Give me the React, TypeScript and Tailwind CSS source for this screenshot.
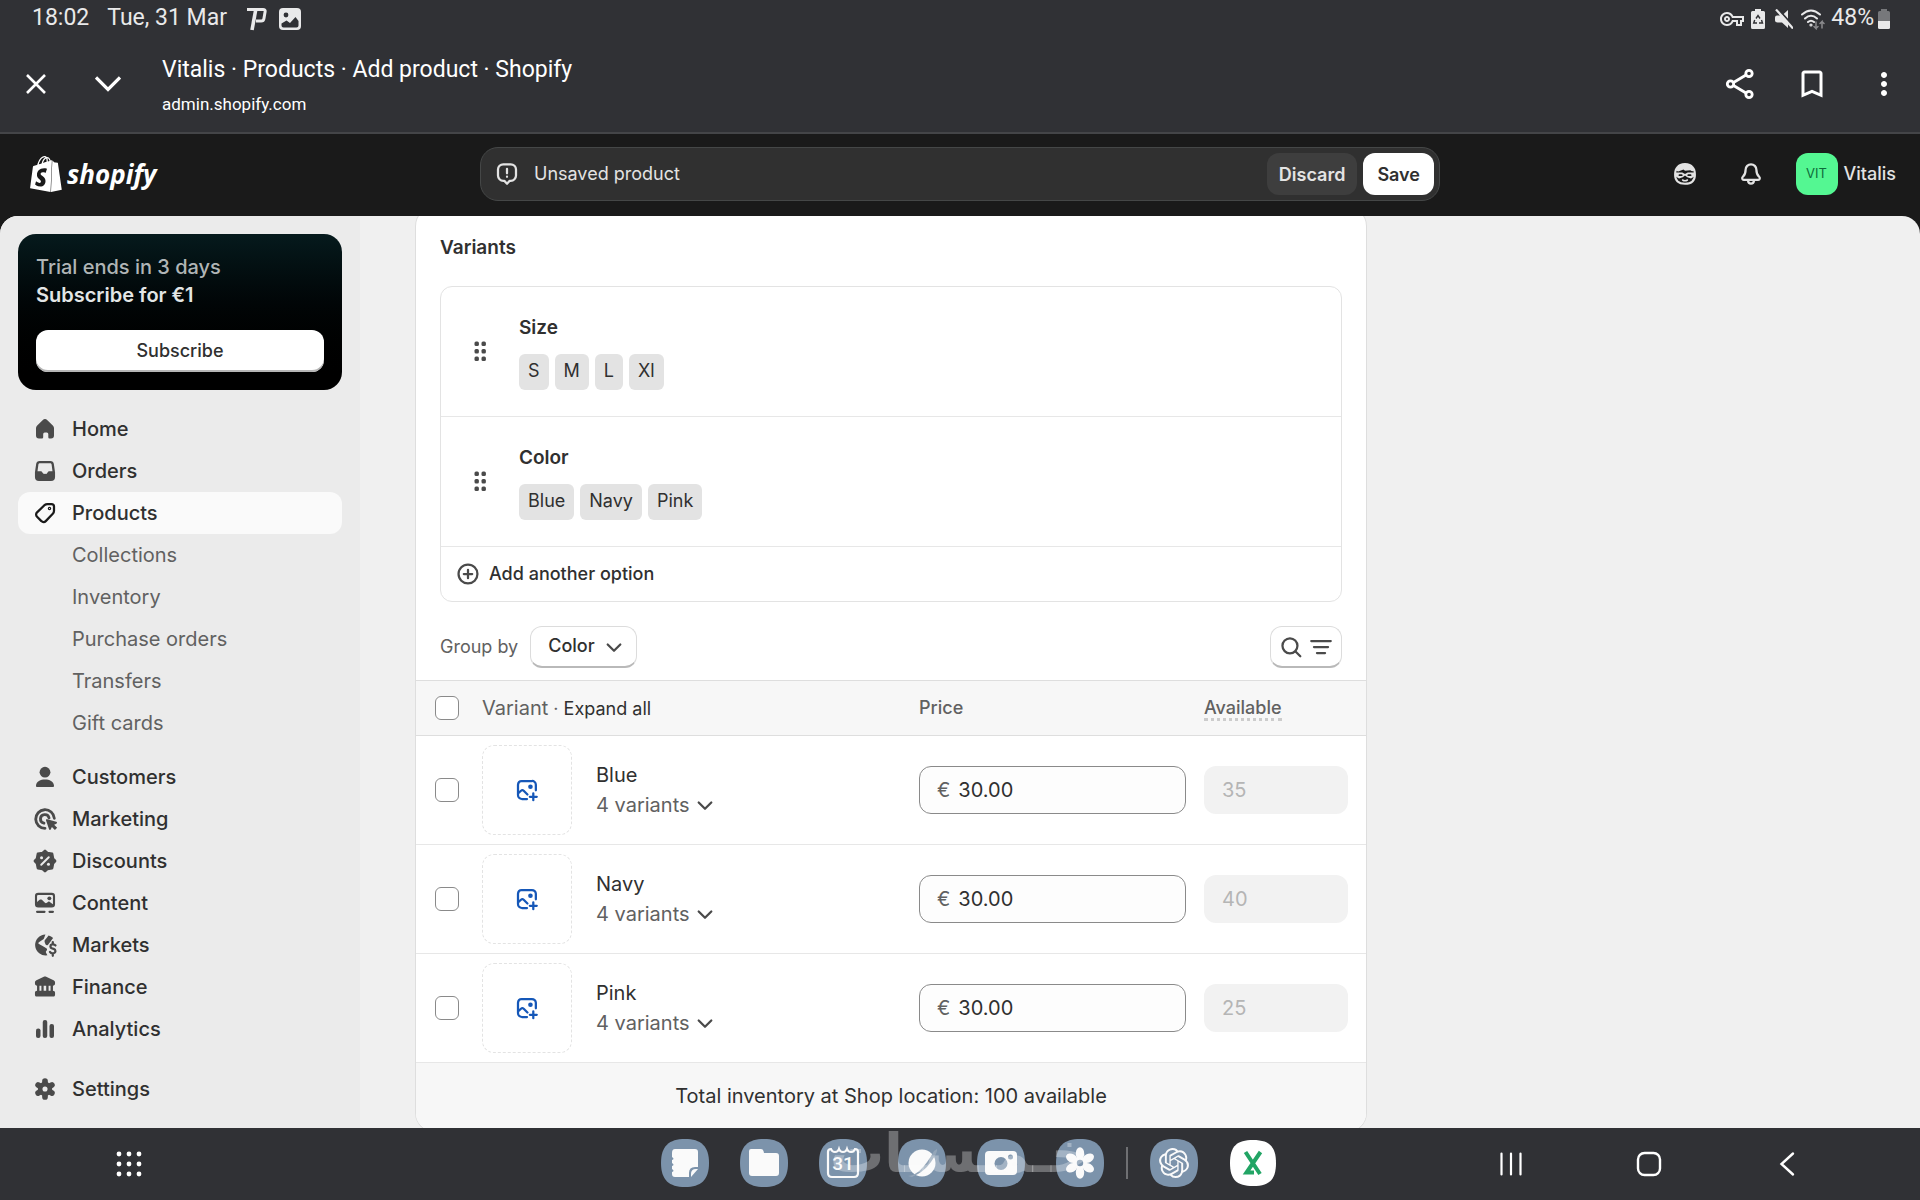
import { ReactNode } from "react";
import { SiOpenai, SiShopify } from "react-icons/si";
import { MdBookmarkBorder, MdMoreVert, MdOutlineVpnKey } from "react-icons/md";

const NAV_ICONS: Record<string, ReactNode> = {
  Home: (
    <path d="M8.4 4.1a2.3 2.3 0 0 1 3.2 0l3.6 3.5c.5.5.8 1.1.8 1.8v4.9a2 2 0 0 1-2 2h-1a.8.8 0 0 1-.8-.8v-2.2a1 1 0 0 0-1-1h-1.4a1 1 0 0 0-1 1v2.2a.8.8 0 0 1-.8.8H6a2 2 0 0 1-2-2V9.400c0-.7.3-1.300.8-1.800z" />
  ),
  Orders: (
    <path
      fillRule="evenodd"
      d="M6.500 3.300h7a2.400 2.400 0 0 1 2.400 2.100l.8 5.500v3.100a2.700 2.700 0 0 1-2.700 2.700H6a2.700 2.700 0 0 1-2.700-2.700v-3.100l.8-5.500a2.400 2.400 0 0 1 2.400-2.100zm.2 1.500c-.6 0-1 .3-1.100.9l-.6 4.500h2c.8 0 1.100.4 1.400 1 .3.500.7.800 1.600.8s1.300-.3 1.600-.8c.3-.6.6-1 1.400-1h2l-.6-4.500c-.1-.6-.5-.9-1.100-.9z"
    />
  ),
  Products: (
    <g fill="none" stroke="currentColor" strokeWidth="1.5" strokeLinejoin="round">
      <path d="M11.700 4h2.600A1.700 1.700 0 0 1 16 5.700v2.800c0 .8-.3 1.500-.8 2l-4.700 4.900a2 2 0 0 1-2.900 0l-2.900-2.900a2 2 0 0 1 0-2.900l4.900-4.800c.6-.5 1.300-.8 2.100-.8z" />
      <circle cx="13" cy="7" r=".4" />
    </g>
  ),
  Customers: (
    <>
      <circle cx="10" cy="6.800" r="3.600" />
      <path d="M4 15.600C4.300 13 7 11.700 10 11.700s5.700 1.300 6 3.900c.1.700-.3 1.100-1 1.100H5c-.7 0-1.100-.4-1-1.100z" />
    </>
  ),
  Marketing: (
    <>
      <path
        d="M16.200 9.500A6.200 6.200 0 1 0 10 16.200M12.700 9.300A2.900 2.900 0 1 0 9.300 12.800"
        fill="none"
        stroke="currentColor"
        strokeWidth="1.900"
        strokeLinecap="round"
      />
      <path d="M10.700 11c-.2-.6.2-1 .8-.8l6 1.700c.6.200.7.900.1 1.200l-1.500.8 2 2-1.500 1.500-2-2-.7 1.500c-.3.600-1 .5-1.200-.1z" />
    </>
  ),
  Discounts: (
    <>
      <path
        d="M10 3.300l1.500 1.400 3.200.6.600 3.200L16.700 10l-1.400 1.500-.6 3.200-3.200.6L10 16.700l-1.500-1.400-3.200-.6-.6-3.200L3.300 10l1.400-1.500.6-3.200 3.200-.6z"
        stroke="currentColor"
        strokeWidth="1.800"
        strokeLinejoin="round"
      />
      <path d="M12.500 7.500l-5 5" stroke="#ebebeb" strokeWidth="1.300" strokeLinecap="round" />
      <circle cx="7.700" cy="7.800" r="1" fill="#ebebeb" />
      <circle cx="12.300" cy="12.200" r="1" fill="#ebebeb" />
    </>
  ),
  Content: (
    <>
      <path
        fillRule="evenodd"
        d="M5.500 3.200h9a2.200 2.200 0 0 1 2.200 2.200v5.400a2.200 2.200 0 0 1-2.200 2.200h-9a2.200 2.200 0 0 1-2.200-2.200V5.400a2.200 2.200 0 0 1 2.200-2.200zm0 1.400a.8.800 0 0 0-.8.800v4l1.700-1.500c.5-.4 1-.4 1.500 0l2.100 2c.4.300.8.300 1.200 0l.8-.6c.4-.3.8-.3 1.200 0l2.100 1.500V5.400a.8.800 0 0 0-.8-.8z"
      />
      <circle cx="12.900" cy="6.900" r="1.300" />
      <path d="M4.700 15.900h5M13 15.900h2.300" stroke="currentColor" strokeWidth="1.400" strokeLinecap="round" />
    </>
  ),
  Markets: (
    <>
      <path d="M10.300 3a7 7 0 1 0 1.300 13.900l-.9-1.700c-.3-.6 0-1.100.4-1.500.5-.5.300-1.100-.2-1.500l-2.500-1.600-2.400-1.300c-.5-.3-.5-.9-.1-1.200l3-2c.7-.5.700-1.700 1.400-3.100z" />
      <path d="M9.800 8.100c-.4-.9.300-1.500.9-2.200l1.700-2.300c1.200.3 2.200.9 3 1.800l-3.200 4.200c-.6.800-1.300.8-1.800.1z" />
      <path
        d="M17 10.300c-.5-.7-1.400-.9-2.300-.7-1.500.4-1.500 2.200.1 2.700l1 .3c1.600.5 1.500 2.500 0 2.900-1 .3-2-.1-2.500-.9M15.200 8v1.500M15.200 15.700v1.500"
        fill="none"
        stroke="currentColor"
        strokeWidth="1.500"
        strokeLinecap="round"
      />
    </>
  ),
  Finance: (
    <path
      fillRule="evenodd"
      d="M9.200 3.200c.5-.3 1.100-.3 1.600 0l4.900 2.300c.7.300 1 .8 1 1.500v.7c0 .9-.6 1.400-1.400 1.400v3.400c.9 0 1.400.6 1.400 1.400v1.200c0 .8-.5 1.300-1.300 1.300H4.600c-.8 0-1.300-.5-1.300-1.300v-1.200c0-.8.5-1.400 1.400-1.400V9.100c-.8 0-1.400-.5-1.400-1.400V7c0-.7.3-1.200 1-1.500zM6.300 9.100v3.400h1.300V9.100zm2.800 0v3.400h1.700V9.100zm3.300 0v3.400h1.300V9.100z"
    />
  ),
  Analytics: (
    <>
      <rect x="4" y="9.600" width="3" height="6.400" rx="1.400" />
      <rect x="8.500" y="4" width="3" height="12" rx="1.400" />
      <rect x="13" y="6.600" width="3" height="9.400" rx="1.400" />
    </>
  ),
  Settings: (
    <>
      <path
        d="M10 4.700v10.600M5.400 7.300l9.200 5.400M14.600 7.300l-9.200 5.400"
        stroke="currentColor"
        strokeWidth="3.800"
        strokeLinecap="round"
      />
      <circle cx="10" cy="10" r="4.800" />
      <circle cx="10" cy="10" r="1.700" fill="#ebebeb" />
    </>
  ),
};

type NavItem = { label: string; active?: boolean; children?: string[] };

const NAV: NavItem[] = [
  { label: "Home" },
  { label: "Orders" },
  {
    label: "Products",
    active: true,
    children: ["Collections", "Inventory", "Purchase orders", "Transfers", "Gift cards"],
  },
  { label: "Customers" },
  { label: "Marketing" },
  { label: "Discounts" },
  { label: "Content" },
  { label: "Markets" },
  { label: "Finance" },
  { label: "Analytics" },
];

const OPTIONS = [
  { name: "Size", values: ["S", "M", "L", "Xl"] },
  { name: "Color", values: ["Blue", "Navy", "Pink"] },
];

const VARIANTS = [
  { name: "Blue", price: "30.00", available: "35" },
  { name: "Navy", price: "30.00", available: "40" },
  { name: "Pink", price: "30.00", available: "25" },
];

function Chevron({ className }: { className: string }) {
  return (
    <svg viewBox="0 0 20 20" className={className} fill="none" stroke="currentColor" strokeWidth="1.5" strokeLinecap="round" strokeLinejoin="round">
      <path d="M5.800 8.300L10 12.500l4.200-4.200" />
    </svg>
  );
}

function StatusBar() {
  return (
    <div className="flex h-[37px] items-center justify-between bg-[#303135] pr-[30px] pl-8 font-[Roboto] text-[23px] text-[#e9e9ea]">
      <div className="flex items-center">
        <span>18:02</span>
        <span className="ml-[18px]">Tue, 31 Mar</span>
        <svg viewBox="0 0 20 24" className="ml-5 h-6 w-5" fill="none" stroke="currentColor" strokeWidth="3">
          <path d="M0 2.500h16q2.500 0 2.100 2.200l-1.200 7q-.4 2.300-2.700 2.300H9" />
          <path d="M8.800 2.500L5 23" strokeWidth="3.600" />
        </svg>
        <svg viewBox="0 0 22 22" className="ml-3 size-[22px]">
          <rect width="22" height="22" rx="4" fill="currentColor" />
          <circle cx="7" cy="7" r="2.400" fill="#303135" />
          <path d="M2.500 17.500v-2l5-3 3.500 2.500 5.500-6 3 4v4.500q0 2-2 2h-13q-2 0-2-2z" fill="#303135" />
        </svg>
      </div>
      <div className="flex items-center">
        <MdOutlineVpnKey className="size-6" />
        <svg viewBox="0 0 14 20" className="ml-[7px] h-5 w-[14px]">
          <path d="M4 0h6v2h2.500q1.500 0 1.500 1.500v15q0 1.500-1.500 1.500h-11Q0 20 0 18.500v-15Q0 2 1.500 2H4z" fill="currentColor" />
          <path d="M5 9.500L7 6.500l2 3M10.500 11l1 3H8M6 14H2.700l1-3" fill="none" stroke="#303135" strokeWidth="1.400" />
        </svg>
        <svg viewBox="0 0 18 20" className="ml-2.5 h-5 w-[18px]">
          <path d="M13 1v18l-6-5.500H2.500Q0 13.500 0 11.500V8.500q0-2 2-2h5z" fill="currentColor" />
          <path d="M3 0l17 19" stroke="#303135" strokeWidth="2" />
          <path d="M1 .500l17 19" stroke="currentColor" strokeWidth="2.200" />
        </svg>
        <svg viewBox="0 0 24 22" className="ml-2 h-[22px] w-6" fill="none" stroke="currentColor" strokeWidth="2" strokeLinecap="round">
          <path d="M1 6.500q9-8 18 0M4 10.500q6-5.500 12 0M7 14q3-2.500 6 0" />
          <circle cx="10" cy="17" r=".6" />
          <path d="M15 14v6.500l-2-2m2 2l2-2M21 20v-6.500l-2 2m2-2l2 2" stroke="#8a8a8d" strokeWidth="1.500" />
        </svg>
        <span className="ml-1.5">48%</span>
        <svg viewBox="0 0 12 20" className="ml-1 h-5 w-3">
          <path d="M3 0h6v2h1.500Q12 2 12 3.500V12H0V3.500Q0 2 1.500 2H3z" fill="#77787b" />
          <path d="M0 12h12v6.500q0 1.500-1.500 1.500h-9Q0 20 0 18.500z" fill="currentColor" />
        </svg>
      </div>
    </div>
  );
}

function BrowserBar() {
  return (
    <div className="flex h-[97px] items-center border-b-2 border-[#444548] bg-[#303135] pr-[18px] pb-0.5 pl-4 text-white">
      <button aria-label="Close tab" className="flex size-10 items-center justify-center">
        <svg viewBox="0 0 20 20" className="size-5" fill="none" stroke="currentColor" strokeWidth="2.600">
          <path d="M1 1l18 18M19 1L1 19" />
        </svg>
      </button>
      <button aria-label="Minimize" className="ml-8 flex size-10 items-center justify-center">
        <svg viewBox="0 0 26 16" className="h-4 w-[26px]" fill="none" stroke="currentColor" strokeWidth="3.200">
          <path d="M1 1.500l12 12 12-12" />
        </svg>
      </button>
      <div className="ml-[34px] flex-1 pt-1.5 font-[Roboto]">
        <div className="text-[23px] leading-[34px]">Vitalis · Products · Add product · Shopify</div>
        <div className="text-[17px] leading-[34px]">admin.shopify.com</div>
      </div>
      <div className="flex items-center gap-9">
        <button aria-label="Share">
          <svg viewBox="0 0 36 36" className="size-9" fill="none" stroke="currentColor" strokeWidth="2.800">
            <circle cx="27" cy="7.500" r="3.200" />
            <circle cx="8.500" cy="18" r="3.200" />
            <circle cx="27" cy="28.500" r="3.200" />
            <path d="M11.500 16.500L24 9M11.500 19.500L24 27" />
          </svg>
        </button>
        <button aria-label="Bookmark">
          <MdBookmarkBorder className="size-9" />
        </button>
        <button aria-label="More">
          <MdMoreVert className="size-9" />
        </button>
      </div>
    </div>
  );
}

function TopBar() {
  return (
    <header className="grid h-[82px] shrink-0 grid-cols-[1fr_minmax(0,960px)_1fr] items-center bg-[#1a1a1a] pb-0.5 text-[#e3e3e3]">
      <a href="#" className="ml-7 flex items-center gap-[3px] text-white">
        <SiShopify className="size-9" />
        <span className="font-['Open_Sans'] text-[26px] font-bold italic">shopify</span>
      </a>
      <div className="flex h-[54px] items-center gap-1.5 rounded-[18px] border border-[#454747] bg-[#303030] pr-[5px] pl-[11px] text-[18px]">
        <svg viewBox="0 0 20 20" className="size-[30px]" fill="none" stroke="currentColor" strokeWidth="1.5" strokeLinecap="round" strokeLinejoin="round">
          <path d="M7.500 3.500h5A3.500 3.500 0 0 1 16 7v4a3.500 3.500 0 0 1-3.500 3.500h-.7L10 16.500l-1.800-2h-.7A3.500 3.500 0 0 1 4 11V7a3.500 3.500 0 0 1 3.500-3.500z" />
          <path d="M10 6.500v3M10 11.800v.1" />
        </svg>
        <span className="ml-1.5 flex-1 pb-0.5">Unsaved product</span>
        <button className="h-[42px] rounded-xl bg-[#3e3e3e] px-3 font-semibold">Discard</button>
        <button className="h-[42px] rounded-xl bg-white px-3.5 font-semibold text-[#303030]">Save</button>
      </div>
      <div className="flex items-center justify-end pr-6">
        <button aria-label="Sidekick" className="mr-9">
          <svg viewBox="0 0 20 20" className="size-[30px]">
            <path
              d="M5 5.500Q6.500 3.300 10 3.300t5 2.200q1.600 1.500 1.600 5 0 6-6.600 6t-6.600-6q0-3.500 1.600-5z"
              fill="none"
              stroke="currentColor"
              strokeWidth="1.400"
            />
            <path d="M4 7.800q1-4.500 6-4.500t6 4.500q-1 .7-2.500-.3L10 7.800 9 7 5.500 8.300z" fill="currentColor" />
            <path d="M3.500 9h4.700l1.800 1 1.800-1h4.700v2.500l-2.500 1.500-2.500-.8L10 11l-1.500 1.200-2.500.8-2.500-1.500z" fill="currentColor" />
            <path d="M6.300 10.800h1.500M12.200 10.800h1.500" stroke="#1a1a1a" strokeWidth="1.200" strokeLinecap="round" />
            <path d="M8.400 14q1.600 1 3.200 0" fill="none" stroke="currentColor" strokeLinecap="round" />
          </svg>
        </button>
        <button aria-label="Notifications" className="mr-[30px]">
          <svg viewBox="0 0 20 20" className="size-[30px]" fill="none" stroke="currentColor" strokeWidth="1.5" strokeLinecap="round" strokeLinejoin="round">
            <path d="M10 3.500a3.600 3.600 0 0 0-3.600 3.600c0 2.300-.5 3.400-1.700 4.600-1 1-.6 2.200.5 2.200h9.600c1.100 0 1.500-1.200.5-2.200-1.200-1.200-1.700-2.300-1.700-4.600A3.600 3.600 0 0 0 10 3.500zM8 14.200q.2 2.200 2 2.200t2-2.200" />
          </svg>
        </button>
        <button className="flex items-center gap-1.5 text-[18px] font-[550]">
          <span className="flex size-[42px] items-center justify-center rounded-xl bg-[#54f792] text-[13px] font-normal text-[#0d6b3a]">VIT</span>
          <span className="pb-0.5">Vitalis</span>
        </button>
      </div>
    </header>
  );
}

function NavLink({ label, active }: { label: string; active?: boolean }) {
  return (
    <a
      href="#"
      className={`flex h-[42px] items-center gap-3 rounded-xl px-3 font-[550] text-[#303030] ${active ? "bg-[#fafafa]" : ""}`}
    >
      <svg viewBox="0 0 20 20" className={`size-[30px] ${active ? "text-[#1a1a1a]" : "text-[#4a4a4a]"}`} fill="currentColor">
        {NAV_ICONS[label]}
      </svg>
      {label}
    </a>
  );
}

function Sidebar() {
  return (
    <aside className="w-[360px] shrink-0 bg-[#ebebeb] px-[18px] pt-[18px] text-[20px]">
      <div className="rounded-[18px] bg-linear-to-b from-[#061a1d] to-black p-[18px]">
        <div className="leading-[30px] font-medium text-[#b0b5b6]">Trial ends in 3 days</div>
        <div className="text-[20px] leading-[27px] font-semibold text-[#e3e6e6]">Subscribe for €1</div>
        <button className="mt-[21px] h-[42px] w-full rounded-xl bg-white pb-0.5 text-[18px] font-medium text-[#303030] shadow-[inset_0_-2px_0_#b5b5b5]">
          Subscribe
        </button>
      </div>
      <nav className="mt-[18px]">
        <ul>
          {NAV.map((item) => (
            <li key={item.label}>
              <NavLink label={item.label} active={item.active} />
              {item.children ? (
                <ul className="mb-3">
                  {item.children.map((child) => (
                    <li key={child}>
                      <a href="#" className="flex h-[42px] items-center pl-[54px] text-[#616161]">
                        {child}
                      </a>
                    </li>
                  ))}
                </ul>
              ) : null}
            </li>
          ))}
        </ul>
        <div className="mt-[18px]">
          <NavLink label="Settings" />
        </div>
      </nav>
    </aside>
  );
}

function OptionList() {
  return (
    <div className="mx-6 mt-[23px] rounded-xl border border-[#e3e3e3]">
      {OPTIONS.map((option) => (
        <div key={option.name} className="flex h-[130px] items-center border-b border-[#e7e7e7] pb-0.5 pl-6">
          <svg viewBox="0 0 30 30" className="size-[30px] text-[#4a4a4a]" fill="currentColor">
            {[7.5, 15, 22.5].map((y) => (
              <g key={y}>
                <rect x="9.500" y={y - 2} width="4.400" height="4.400" rx="1.500" />
                <rect x="16.500" y={y - 2} width="4.400" height="4.400" rx="1.500" />
              </g>
            ))}
          </svg>
          <div className="ml-6">
            <h3 className="text-[19px] leading-8 font-semibold">{option.name}</h3>
            <div className="mt-2.5 flex gap-1.5">
              {option.values.map((value) => (
                <span key={value} className="rounded-md bg-[#e3e3e3] px-[9px] pb-0.5 text-[18px] leading-[34px]">
                  {value}
                </span>
              ))}
            </div>
          </div>
        </div>
      ))}
      <button className="flex h-[54px] items-center gap-1.5 pl-3 text-[18px] font-[550]">
        <svg viewBox="0 0 20 20" className="size-[30px] text-[#4a4a4a]" fill="none" stroke="currentColor" strokeWidth="1.5" strokeLinecap="round">
          <circle cx="10" cy="10" r="6.300" />
          <path d="M10 7.200v5.600M7.200 10h5.600" />
        </svg>
        <span className="pb-0.5">Add another option</span>
      </button>
    </div>
  );
}

function GroupBar() {
  return (
    <div className="flex items-center justify-between px-6 pt-6 pb-3">
      <div className="flex items-center gap-3 text-[18px]">
        <label htmlFor="group-by" className="pb-0.5 text-[#616161]">
          Group by
        </label>
        <div className="grid items-center">
          <select
            id="group-by"
            className="col-start-1 row-start-1 h-[42px] w-[107px] appearance-none rounded-xl border border-b-2 border-[#dcdcdc] border-b-[#b9b9b9] bg-white pb-0.5 pl-[17px] font-[550] text-[#303030]"
          >
            <option>Color</option>
            <option>Size</option>
          </select>
          <Chevron className="pointer-events-none col-start-1 row-start-1 mr-2 size-[30px] justify-self-end text-[#4a4a4a]" />
        </div>
      </div>
      <button
        aria-label="Search and filter"
        className="flex h-[42px] w-[72px] items-center justify-center rounded-xl border border-b-2 border-[#dcdcdc] border-b-[#b9b9b9] text-[#4a4a4a]"
      >
        <svg viewBox="0 0 20 20" className="size-[30px]" fill="none" stroke="currentColor" strokeWidth="1.5" strokeLinecap="round">
          <circle cx="9.300" cy="9.200" r="5" />
          <path d="M13 13l3.200 3.200" />
        </svg>
        <svg viewBox="0 0 20 20" className="size-[30px]" fill="none" stroke="currentColor" strokeWidth="1.5" strokeLinecap="round">
          <path d="M3.500 6h13M5.300 10h9.400M7.300 14h5.400" />
        </svg>
      </button>
    </div>
  );
}

function Checkbox({ label }: { label: string }) {
  return (
    <input
      type="checkbox"
      aria-label={label}
      className="block size-6 appearance-none rounded-md border border-[#8a8a8a] bg-white"
    />
  );
}

function VariantTable() {
  return (
    <table className="w-full table-fixed text-left text-[20px]">
      <colgroup>
        <col className="w-[66px]" />
        <col />
        <col className="w-[285px]" />
        <col className="w-[162px]" />
      </colgroup>
      <thead>
        <tr className="h-[55px] border-y border-[#dedede] bg-[#f7f7f7] text-[18px] text-[#616161]">
          <th className="pl-[19px]">
            <Checkbox label="Select all variants" />
          </th>
          <th className="font-normal">
            <span className="text-[20px]">Variant</span> ·{" "}
            <button className="text-[#303030]">Expand all</button>
          </th>
          <th className="pb-0.5 font-[550]">Price</th>
          <th className="pb-0.5 font-[550]">
            <span className="border-b-3 border-dotted border-[#cccccc]">Available</span>
          </th>
        </tr>
      </thead>
      <tbody>
        {VARIANTS.map((variant) => (
          <tr key={variant.name} className="h-[109px] border-b border-[#e7e7e7]">
            <td className="pl-[19px]">
              <Checkbox label={`Select ${variant.name}`} />
            </td>
            <td>
              <div className="flex items-center gap-6">
                <button
                  aria-label={`Add image for ${variant.name}`}
                  className="flex size-[90px] items-center justify-center rounded-xl border border-dashed border-[#e3e3e3]"
                >
                  <svg viewBox="0 0 20 20" className="size-[30px]" fill="none" stroke="#1557b8" strokeWidth="1.5" strokeLinecap="round" strokeLinejoin="round">
                    <path d="M10 16H6.500A2.600 2.600 0 0 1 4 13.400V6.500A2.600 2.600 0 0 1 6.500 4h6.800a2.600 2.600 0 0 1 2.600 2.500v3.700M4.200 12.200L6 10.500q.9-.8 1.800 0l2.500 2.500M14.200 12.200v4.600M11.900 14.500h4.600" />
                    <circle cx="12.300" cy="7.800" r=".8" fill="#1557b8" />
                  </svg>
                </button>
                <div className="leading-[30px]">
                  <div>{variant.name}</div>
                  <button className="flex items-center text-[#616161]">
                    4 variants
                    <Chevron className="size-[30px] text-[#4a4a4a]" />
                  </button>
                </div>
              </div>
            </td>
            <td className="pr-[18px]">
              <label className="flex h-12 items-center gap-2 rounded-xl border border-[#8a8a8a] bg-[#fdfdfd] pl-[17px] text-[#616161]">
                €
                <input
                  aria-label={`${variant.name} price`}
                  defaultValue={variant.price}
                  className="w-full min-w-0 bg-transparent text-[#303030] outline-none"
                />
              </label>
            </td>
            <td className="pr-[18px]">
              <input
                aria-label={`${variant.name} available`}
                defaultValue={variant.available}
                disabled
                className="block h-12 w-full rounded-xl bg-[#f2f2f2] px-[18px] text-[#b5b5b5]"
              />
            </td>
          </tr>
        ))}
      </tbody>
    </table>
  );
}

function Tile({ children }: { children?: ReactNode }) {
  return (
    <svg viewBox="0 0 48 48" className="size-12" fill="#fafafa">
      <path d="M24 0C40 0 48 7 48 24s-8 24-24 24S0 41 0 24 8 0 24 0z" fill="#7c93ab" />
      {children}
    </svg>
  );
}

function TaskBar() {
  return (
    <footer className="relative grid h-[72px] shrink-0 grid-cols-[661fr_auto_643fr] items-center bg-[#303135] text-white">
      <button aria-label="All apps" className="ml-[116px] justify-self-start">
        <svg viewBox="0 0 26 26" className="size-[26px]" fill="currentColor">
          {[3, 13, 23].map((y) => [3, 13, 23].map((x) => <circle key={`${x}-${y}`} cx={x} cy={y} r="2.400" />))}
        </svg>
      </button>
      <div className="flex items-center pb-0.5">
        <div className="flex gap-[31px]">
          <Tile>
            <path d="M14 10h20q3 0 3 3v15h-3q-6 0-6 6v4H14q-3 0-3-3v-2q3-1 0-3v-3q3-1 0-3v-3q3-1 0-3v-4q0-4 3-4z" />
            <path d="M30 38v-3q0-5 5-5h2z" />
          </Tile>
          <Tile>
            <path d="M11 10h10q2 0 2.500 2l.5 2h12q3 0 3 3v17q0 3-3 3H12q-3 0-3-3V12q0-2 2-2z" />
          </Tile>
          <Tile>
            <path d="M9 13q0-3 3-3 1 3 4 3 3 0 4-3 1 3 4 3t4-3q1 3 4 3t4-3q3 0 3 3v21q0 4-4 4H13q-4 0-4-4z" fill="none" stroke="#fafafa" strokeWidth="2.200" />
            <text x="24" y="31" textAnchor="middle" fontFamily="Roboto" fontWeight="500" fontSize="19">31</text>
          </Tile>
          <Tile>
            <circle cx="24" cy="24" r="13.500" />
            <path d="M10 37Q22 37 36 12l3-2q1 3-6 13T14 38z" fill="#93a5b8" />
          </Tile>
          <Tile>
            <path d="M12 12h24q4 0 4 4v16q0 4-4 4H12q-4 0-4-4V16q0-4 4-4z" />
            <circle cx="24" cy="24.500" r="6.500" fill="#7c93ab" />
            <circle cx="33.500" cy="18" r="2.500" fill="#7c93ab" />
          </Tile>
          <Tile>
            {[0, 60, 120, 180, 240, 300].map((angle) => (
              <ellipse key={angle} cx="24" cy="14.500" rx="4.200" ry="6.200" transform={`rotate(${angle} 24 24)`} />
            ))}
            <circle cx="24" cy="24" r="6" />
            <circle cx="24" cy="24" r="3.200" fill="#7c93ab" />
          </Tile>
        </div>
        <div className="mx-[22px] h-8 w-0.5 bg-[#6f7073]" />
        <div className="flex gap-[31px]">
          <div className="grid place-items-center">
            <div className="col-start-1 row-start-1">
              <Tile />
            </div>
            <SiOpenai className="col-start-1 row-start-1 size-[30px] text-[#fafafa]" />
          </div>
          <svg viewBox="0 0 48 48" className="size-12">
            <path d="M24 1C40 1 47 7 47 24s-7 23-23 23S1 41 1 24 8 1 24 1z" fill="#fff" />
            <path d="M16.500 13L31 35M31.500 13L17.500 33.500H25" fill="none" stroke="#22a565" strokeWidth="4" />
          </svg>
        </div>
      </div>
      <div className="mr-[119px] flex items-center gap-[110px] justify-self-end">
        <button aria-label="Recents">
          <svg viewBox="0 0 28 28" className="size-7" stroke="currentColor" strokeWidth="2.200" strokeLinecap="round">
            <path d="M4.500 3.500v21M14 3.500v21M23.500 3.500v21" />
          </svg>
        </button>
        <button aria-label="Home screen">
          <svg viewBox="0 0 28 28" className="size-7" fill="none" stroke="currentColor" strokeWidth="2.400">
            <rect x="3" y="3" width="22" height="22" rx="6.500" />
          </svg>
        </button>
        <button aria-label="Back">
          <svg viewBox="0 0 28 28" className="size-7" fill="none" stroke="currentColor" strokeWidth="2.400" strokeLinecap="round">
            <path d="M20 3.500L8.500 14 20 24.500" />
          </svg>
        </button>
      </div>
      <div
        dir="rtl"
        lang="ar"
        className="pointer-events-none absolute inset-x-0 bottom-4 text-center font-['DejaVu_Sans'] text-[54px] leading-[60px] font-bold text-white/30"
      >
        خـمـسـات
      </div>
    </footer>
  );
}

export default function App() {
  return (
    <div className="flex h-screen flex-col overflow-hidden bg-[#1a1a1a] font-[Inter,sans-serif] text-[#303030]">
      <div className="shrink-0">
        <StatusBar />
        <BrowserBar />
      </div>
      <TopBar />
      <div className="flex min-h-0 flex-1 overflow-hidden rounded-t-[18px] bg-[#f0f0f0]">
        <Sidebar />
        <main className="grid flex-1 grid-cols-[950fr_474fr] items-start gap-6 px-14">
          <section className="-mt-2 overflow-hidden rounded-[18px] bg-white shadow-[0_0_0_1px_#dedede]">
            <h2 className="px-6 pt-[25px] text-[19px] leading-[30px] font-semibold">Variants</h2>
            <OptionList />
            <GroupBar />
            <VariantTable />
            <p className="bg-[#f7f7f7] pt-[18px] pb-5 text-center text-[20px] leading-[30px]">
              Total inventory at Shop location: 100 available
            </p>
          </section>
        </main>
      </div>
      <TaskBar />
    </div>
  );
}
